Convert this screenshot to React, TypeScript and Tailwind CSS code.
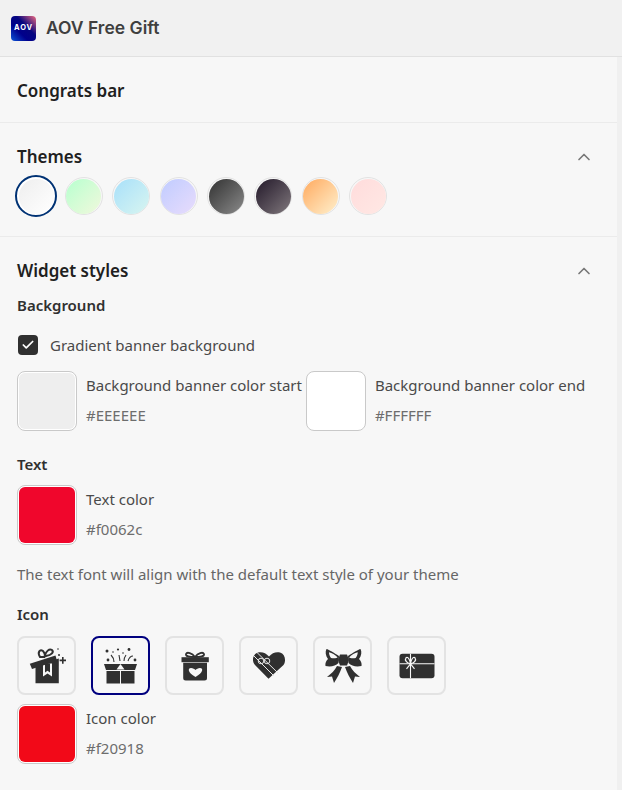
import { Check, ChevronUp } from "lucide-react";
import type { ReactNode } from "react";

const themes = [
  "from-[#eeeeee] to-[#ffffff]",
  "from-[#b5ffcf] to-[#f0f8dc]",
  "from-[#a8e0fa] to-[#d8f5f0]",
  "from-[#c0ccff] to-[#e8dcfc]",
  "from-[#333333] to-[#8c8c8c]",
  "from-[#241a2a] to-[#827a7e]",
  "from-[#ffa95c] to-[#fff0cc]",
  "from-[#ffdcdc] to-[#ffe8e4]",
];

function AovLogo() {
  return (
    <div className="flex h-[25px] w-[25px] items-center justify-center rounded-[4px] bg-[linear-gradient(45deg,#0a55d8_0%,#00008c_35%,#05057f_60%,#f06a80_100%)]">
      <span className="font-['Inter',sans-serif] text-[7.500px] leading-none font-bold tracking-[0.8px] text-white">
        AOV
      </span>
    </div>
  );
}

function Swatch({ color, label, value }: { color: string; label: string; value: string }) {
  return (
    <div className="flex gap-[9px]">
      <div className="flex h-[60px] w-[60px] shrink-0 items-center justify-center rounded-[8px] border border-[#c9c9c9] bg-white">
        <div className={`h-[56px] w-[56px] rounded-[6px] ${color}`} />
      </div>
      <div className="pt-[4px] text-[15px] leading-[20px] text-[#4a4a4a] whitespace-nowrap">
        <div>{label}</div>
        <div className="mt-[10px] text-[#6d6d6d]">{value}</div>
      </div>
    </div>
  );
}

function GiftOpen() {
  return (
    <svg viewBox="0 0 40 40" className="h-[40px] w-[40px]" fill="#303030">
      <path d="M8.500 19.500 31.800 12.500V37.200H8.500z" />
      <path d="M16 17.500h9v13l-4.500-3-4.500 3z" fill="#f7f7f7" />
      <path d="M18 17.500h5v9l-2.500-1.800-2.500 1.800z" />
      <path d="M2.800 17.800 28.500 9.500l1.500 5.500-25 8z" />
      <path d="M13 11c-3-5 0-8 3-6 1 1 1.500 2 2 4 1-3 4-7 7-5 2 2 0 5-6 6l-3 1z" fill="none" stroke="#303030" strokeWidth="2" />
      <path d="M35 11h1.600v2.600h2.400v1.600h-2.400v2.600H35v-2.600h-2.400v-1.600H35z" />
      <circle cx="32" cy="9" r="1" />
      <circle cx="31" cy="3" r=".8" />
    </svg>
  );
}

function GiftBurst() {
  return (
    <svg viewBox="0 0 40 40" className="h-[40px] w-[40px]" fill="#303030">
      <path d="M3 18h33l-2 6H5z" />
      <path d="M5.500 25h13.500v12.500H5.500zM20 25h13.500v12.500H20z" />
      <path d="M19.500 18l-4 5.500h8z" fill="#f7f7f7" />
      <g fill="none" stroke="#303030" strokeWidth="1.100">
        <path d="M13 16c0-3-1-5-3-7M19 15l-1-6M23 15c0-2 .5-4 2-6M27 15c1-3 3-5 5-5" />
      </g>
      <circle cx="6" cy="5" r="1.500" />
      <circle cx="17" cy="3.500" r="1.100" />
      <circle cx="28" cy="3.500" r="1.400" />
      <circle cx="34" cy="14" r="1.400" />
      <circle cx="7" cy="14" r="1.400" />
      <circle cx="22" cy="7" r=".8" />
      <circle cx="12" cy="6" r=".8" />
    </svg>
  );
}

function GiftHeart() {
  return (
    <svg viewBox="0 0 40 40" className="h-[40px] w-[40px]" fill="#303030">
      <path d="M20 11c-3-4-8-5.500-9-3-.8 2.500 4 3 9 3zm0 0c3-4 8-5.500 9-3 .8 2.500-4 3-9 3z" fill="none" stroke="#303030" strokeWidth="1.800" />
      <path d="M6.500 11.200h27.300v5H6.500z" />
      <path d="M8.200 16.800h23.800v15.200a2.500 2.500 0 0 1-2.500 2.500H10.700a2.500 2.500 0 0 1-2.500-2.500z" />
      <path d="M20.500 31c-8-4.500-8-9-4.500-9 2 0 3.500 1 4.500 2 1-1 2.500-2 4.500-2 3.500 0 3.500 4.500-4.500 9z" fill="#f7f7f7" />
    </svg>
  );
}

function HeartBox() {
  return (
    <svg viewBox="0 0 40 40" className="h-[40px] w-[40px]" fill="#303030">
      <path d="M19.500 32.800 6 19C2.500 15 3.500 8 9 6.500c4-1 8 .5 11 4 3-3.500 7-5 11-4 5 1.500 6.500 8 3.500 12.500z" />
      <g fill="none" stroke="#e8e8e8" strokeWidth="1">
        <path d="M8 6.500 29 27M5 10l20 20" />
        <circle cx="12" cy="15" r="2.800" />
        <circle cx="18" cy="15" r="2.800" />
      </g>
    </svg>
  );
}

function Bow() {
  return (
    <svg viewBox="0 0 40 40" className="h-[40px] w-[40px]" fill="#303030">
      <path d="M16 10C11 7 6 3.500 3.500 3 2 6 2.500 9.500 5 13c-2 2-3 4-2.500 7 5.500 1 10 0 13-3z" />
      <path d="M25 10c5-3 10-6.500 12.500-7C39 6 38.500 9.500 36 13c2 2 3 4 2.500 7-5.500 1-10 0-13-3z" />
      <path d="M6 6.200c3 .8 6 2.500 8.500 5-.5 1-3.500 1.500-6.500.8C6.500 10 6 8 6 6.200zM34.700 6.200c-3 .8-6 2.500-8.500 5 .5 1 3.500 1.500 6.500.8 1.500-2 2-4 2-5.800z" fill="#f7f7f7" />
      <path d="M17 8.500h7l2 5.500-2 5.500h-7l-2-5.500z" />
      <path d="M14 20c-2 4-6 8-10 11l5-.5 2 6.500c3-5 6-10 8-16z" />
      <path d="M27 20c2 4 6 8 10 11l-5-.5-2 6.500c-3-5-6-10-8-16z" />
    </svg>
  );
}

function GiftCard() {
  return (
    <svg viewBox="0 0 40 40" className="h-[40px] w-[40px]" fill="#303030">
      <rect x="2.500" y="7.800" width="35" height="24.400" rx="3" />
      <path d="M2.500 17.800h35M13.500 7.800v24.400" stroke="#f7f7f7" strokeWidth="1.100" fill="none" />
      <path d="M13.500 17.800c-4-.5-6-4-4.500-6 2-1.500 4 2 4.500 6zm0 0c4-.5 6-4 4.500-6-2-1.500-4 2-4.500 6zm0 0-4 5m4-5 4 5" fill="#303030" stroke="#f7f7f7" strokeWidth="1.200" />
    </svg>
  );
}

function IconTile({ selected, children }: { selected?: boolean; children: ReactNode }) {
  return (
    <div
      className={`flex h-[59px] w-[59px] items-center justify-center rounded-[8px] border-2 ${
        selected ? "border-[#00007f]" : "border-[#e3e3e3]"
      }`}
    >
      {children}
    </div>
  );
}

function SectionTitle({ children }: { children: ReactNode }) {
  return <h2 className="text-[17px] leading-[24px] font-semibold text-[#202020]">{children}</h2>;
}

function SubTitle({ children }: { children: ReactNode }) {
  return <h3 className="text-[15px] leading-[20px] font-semibold text-[#303030]">{children}</h3>;
}

export default function App() {
  return (
    <div className="flex h-[790px] w-[622px] flex-col overflow-hidden bg-[#f7f7f7] font-['Noto_Sans',sans-serif]">
      <header className="flex h-[57px] shrink-0 items-center gap-[10px] border-b border-[#e1e1e1] bg-[#f1f1f1] pl-[11px]">
        <AovLogo />
        <span className="font-['Inter',sans-serif] text-[17.500px] font-semibold text-[#3f3f3f]">AOV Free Gift</span>
      </header>

      <div className="flex min-h-0 flex-1">
        <main className="min-w-0 flex-1">
          <section className="flex h-[66px] items-center border-b border-[#ebebeb] pt-[2px] pl-[17px]">
            <SectionTitle>Congrats bar</SectionTitle>
          </section>

          <section className="h-[114px] border-b border-[#ebebeb] pt-[22px] pr-[23px] pl-[17px]">
            <div className="flex items-center justify-between">
              <SectionTitle>Themes</SectionTitle>
              <ChevronUp size={20} strokeWidth={2} className="text-[#777777]" />
            </div>
            <div className="mt-[6px] -ml-[2px] flex items-center gap-[9.400px]">
              {themes.map((t, i) => (
                <div
                  key={t}
                  className={
                    i === 0
                      ? "mr-[-1.500px] flex h-[42px] w-[42px] items-center justify-center rounded-full border-[2.500px] border-[#003274] bg-white"
                      : "flex h-[38px] w-[38px] items-center justify-center rounded-full border border-[#e3e3e3]"
                  }
                >
                  <div className={`h-[35px] w-[35px] rounded-full bg-gradient-to-br ${t}`} />
                </div>
              ))}
            </div>
          </section>

          <section className="pt-[22px] pr-[23px] pl-[17px]">
            <div className="flex items-center justify-between">
              <SectionTitle>Widget styles</SectionTitle>
              <ChevronUp size={20} strokeWidth={2} className="text-[#777777]" />
            </div>
            <div className="mt-[12px]">
              <SubTitle>Background</SubTitle>
            </div>
            <label className="mt-[20px] ml-[1px] flex items-center gap-[12px]">
              <span className="flex h-[20px] w-[20px] items-center justify-center rounded-[4px] bg-[#303030]">
                <Check size={14} strokeWidth={3} className="text-white" />
              </span>
              <span className="text-[15px] leading-[20px] text-[#4a4a4a]">Gradient banner background</span>
            </label>
            <div className="mt-[16px] flex gap-[4px]">
              <Swatch color="bg-[#eeeeee]" label="Background banner color start" value="#EEEEEE" />
              <Swatch color="bg-[#ffffff]" label="Background banner color end" value="#FFFFFF" />
            </div>
            <div className="mt-[23px]">
              <SubTitle>Text</SubTitle>
            </div>
            <div className="mt-[11px]">
              <Swatch color="bg-[#f0062c]" label="Text color" value="#f0062c" />
            </div>
            <p className="mt-[19px] text-[15px] leading-[20px] text-[#666666]">
              The text font will align with the default text style of your theme
            </p>
            <div className="mt-[20px]">
              <SubTitle>Icon</SubTitle>
            </div>
            <div className="mt-[12px] flex gap-[15px]">
              <IconTile><GiftOpen /></IconTile>
              <IconTile selected><GiftBurst /></IconTile>
              <IconTile><GiftHeart /></IconTile>
              <IconTile><HeartBox /></IconTile>
              <IconTile><Bow /></IconTile>
              <IconTile><GiftCard /></IconTile>
            </div>
            <div className="mt-[9px]">
              <Swatch color="bg-[#f20918]" label="Icon color" value="#f20918" />
            </div>
          </section>
        </main>
        <div className="w-[5px] shrink-0 bg-[#f0f0f0]" />
      </div>
    </div>
  );
}
